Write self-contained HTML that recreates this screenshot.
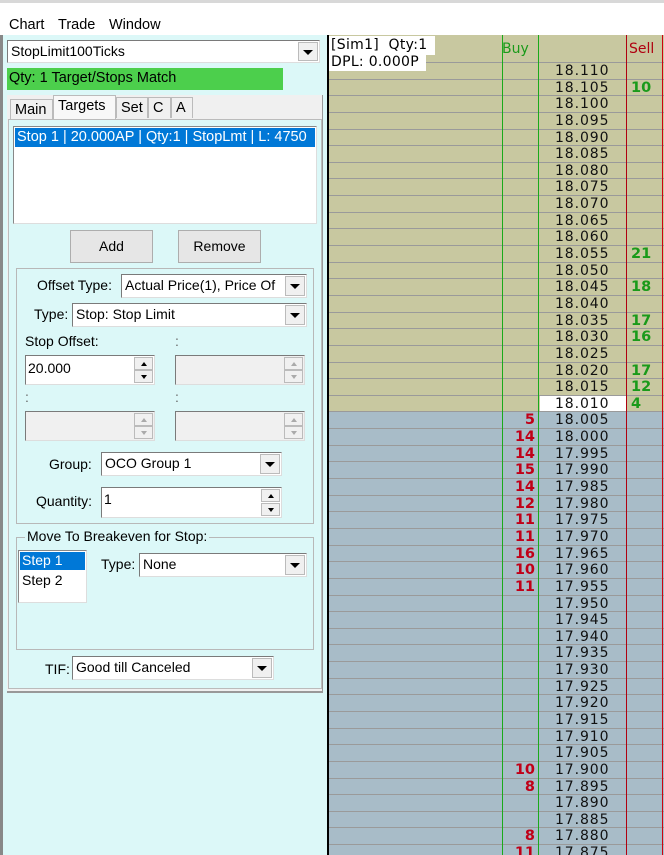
<!DOCTYPE html>
<html><head><meta charset="utf-8"><style>
*{box-sizing:border-box;margin:0;padding:0}
body{width:664px;height:855px;overflow:hidden;position:relative;background:#dcf8f8;font-family:"Liberation Sans",Arial,sans-serif;font-size:14px;color:#000}
.a{position:absolute}
.menu{left:0;top:0;width:664px;height:35px;background:#fff;border-top:3px solid #d8d8d8}
.menu span{position:absolute;top:14px;font-size:14.5px}
.combo{position:absolute;background:#fff;border:1px solid #7a7a7a;border-right-color:#ddd;border-bottom-color:#ddd;font-size:14px;padding:2px 3px;white-space:nowrap;overflow:hidden}
.combo .dd{position:absolute;right:1px;top:1px;bottom:1px;width:20px;background:#f0f0f0;border:1px solid #bbb}
.combo .dd:after{content:"";position:absolute;left:4px;top:7px;border-left:5px solid transparent;border-right:5px solid transparent;border-top:5px solid #000}
.spin{position:absolute;background:#fff;border:1px solid #7a7a7a;border-right-color:#ddd;border-bottom-color:#ddd;font-size:14px;padding:4px 2px}
.spin.dis{background:#f0f0f0}
.spin .u,.spin .d{position:absolute;right:1px;width:19px;height:13px;background:#f0f0f0;border:1px solid #bbb}
.spin .u{top:1px}.spin .d{bottom:1px}
.spin .u:after{content:"";position:absolute;left:6px;top:4px;border-left:3px solid transparent;border-right:3px solid transparent;border-bottom:4px solid #000}
.spin .d:after{content:"";position:absolute;left:6px;top:4px;border-left:3px solid transparent;border-right:3px solid transparent;border-top:4px solid #000}
.spin.dis .u:after{border-bottom-color:#aaa}.spin.dis .d:after{border-top-color:#aaa}
.btn{position:absolute;background:#e6e6e6;border:1px solid #adadad;text-align:center;line-height:31px;font-size:14px}
.grp{position:absolute;border:1px solid #b8b8b8}
.lbl{position:absolute;font-size:14px;white-space:nowrap}
.tab{position:absolute;top:97px;height:21px;background:#f0f0f0;border:1px solid #bbb;border-bottom:none;font-size:14.5px;padding:2px 4px}
#lad{position:absolute;left:327px;top:35px;width:337px;height:820px;background:#c8c8a0;border-left:2px solid #000;overflow:hidden;font-family:"DejaVu Sans",sans-serif}
.rows{position:absolute;left:0;top:27px;width:340px}
.r{height:16.65px;border-top:1px solid #9a9a9a;position:relative;font-size:14px;line-height:17px}
.t{background:#c8c8a0}.l{background:#a8bcc8}
.r i{font-style:normal;position:absolute;left:226px;letter-spacing:0.9px;color:#111}
.r .w{position:absolute;left:211px;width:87px;top:0;bottom:0;background:#fff}
.r .b{position:absolute;left:174px;width:32px;text-align:right;color:#c00018;font-weight:bold;font-size:14.5px}
.r .s{position:absolute;left:302px;color:#1a9a1a;font-weight:bold;font-size:14.5px}
.vl{position:absolute;top:0;bottom:0;width:1px}
</style></head><body>
<div class="a menu"><span style="left:9px">Chart</span><span style="left:58px">Trade</span><span style="left:109px">Window</span></div>
<div class="a" style="left:0;top:35px;width:3px;height:820px;background:#888"></div>

<div class="combo" style="left:7px;top:40px;width:313px;height:23px">StopLimit100Ticks<div class="dd"></div></div>
<div class="a" style="left:7px;top:68px;width:276px;height:22px;background:#4ccf4c;font-size:14.5px;padding:2px 2px">Qty: 1 Target/Stops Match</div>

<div class="a" style="left:7px;top:95px;width:316px;height:598px;background:#f0f0f0;border-bottom:2px solid #999;border-right:1px solid #999"></div>
<div class="tab" style="left:10px;width:43px;top:99px">Main</div>
<div class="tab" style="left:53px;width:63px;top:95px;height:24px;background:#f8f8f8">Targets</div>
<div class="tab" style="left:116px;width:32px">Set</div>
<div class="tab" style="left:148px;width:23px">C</div>
<div class="tab" style="left:171px;width:22px">A</div>
<div class="a" style="left:8px;top:119px;width:314px;height:570px;background:#dcf8f8;border:1px solid #bbb"></div>

<div class="a" style="left:13px;top:126px;width:304px;height:98px;background:#fff;border:1px solid #888;border-right-color:#ddd;border-bottom-color:#ddd"></div>
<div class="a" style="left:15px;top:128px;width:300px;height:19px;background:#0078d7;color:#fff;font-size:14.5px;padding:1px 2px;white-space:nowrap;overflow:hidden">Stop 1 | 20.000AP | Qty:1 | StopLmt | L: 4750</div>

<div class="btn" style="left:70px;top:230px;width:83px;height:33px">Add</div>
<div class="btn" style="left:178px;top:230px;width:83px;height:33px">Remove</div>

<div class="grp" style="left:16px;top:268px;width:298px;height:256px"></div>
<div class="lbl" style="left:37px;top:277px">Offset Type:</div>
<div class="combo" style="left:121px;top:274px;width:186px;height:24px">Actual Price(1), Price Of<div class="dd"></div></div>
<div class="lbl" style="left:34px;top:306px">Type:</div>
<div class="combo" style="left:72px;top:303px;width:235px;height:24px">Stop: Stop Limit<div class="dd"></div></div>
<div class="lbl" style="left:25px;top:333px">Stop Offset:</div>
<div class="lbl" style="left:175px;top:333px;color:#666">:</div>
<div class="spin" style="left:25px;top:355px;width:130px;height:30px">20.000<div class="u"></div><div class="d"></div></div>
<div class="spin dis" style="left:175px;top:355px;width:130px;height:30px"><div class="u"></div><div class="d"></div></div>
<div class="lbl" style="left:25px;top:389px;color:#666">:</div>
<div class="lbl" style="left:175px;top:389px;color:#666">:</div>
<div class="spin dis" style="left:25px;top:411px;width:130px;height:30px"><div class="u"></div><div class="d"></div></div>
<div class="spin dis" style="left:175px;top:411px;width:130px;height:30px"><div class="u"></div><div class="d"></div></div>
<div class="lbl" style="left:49px;top:456px">Group:</div>
<div class="combo" style="left:101px;top:452px;width:181px;height:24px">OCO Group 1<div class="dd"></div></div>
<div class="lbl" style="left:36px;top:493px">Quantity:</div>
<div class="spin" style="left:101px;top:487px;width:181px;height:31px;padding-top:3px">1<div class="u"></div><div class="d"></div></div>

<div class="grp" style="left:16px;top:537px;width:298px;height:113px"></div>
<div class="lbl" style="left:25px;top:528px;background:#dcf8f8;padding:0 2px">Move To Breakeven for Stop:</div>
<div class="a" style="left:18px;top:550px;width:69px;height:53px;background:#fff;border:1px solid #888;border-right-color:#ddd;border-bottom-color:#ddd"></div>
<div class="a" style="left:20px;top:552px;width:65px;height:18px;background:#0078d7;color:#fff;padding:0 2px">Step 1</div>
<div class="lbl" style="left:22px;top:572px">Step 2</div>
<div class="lbl" style="left:101px;top:556px">Type:</div>
<div class="combo" style="left:139px;top:553px;width:168px;height:24px">None<div class="dd"></div></div>
<div class="lbl" style="left:45px;top:661px">TIF:</div>
<div class="combo" style="left:72px;top:656px;width:202px;height:24px">Good till Canceled<div class="dd"></div></div>

<div id="lad">
<div class="a" style="left:170px;top:0;height:27px;width:40px;font-size:14px;color:#1a9a1a;padding-top:6px;padding-left:3px">Buy</div>
<div class="a" style="left:300px;top:0;height:27px;font-size:14px;color:#b00010;padding-top:6px">Sell</div>
<div class="rows">
<div class="r t"><i>18.110</i></div>
<div class="r t"><i>18.105</i><b class="s">10</b></div>
<div class="r t"><i>18.100</i></div>
<div class="r t"><i>18.095</i></div>
<div class="r t"><i>18.090</i></div>
<div class="r t"><i>18.085</i></div>
<div class="r t"><i>18.080</i></div>
<div class="r t"><i>18.075</i></div>
<div class="r t"><i>18.070</i></div>
<div class="r t"><i>18.065</i></div>
<div class="r t"><i>18.060</i></div>
<div class="r t"><i>18.055</i><b class="s">21</b></div>
<div class="r t"><i>18.050</i></div>
<div class="r t"><i>18.045</i><b class="s">18</b></div>
<div class="r t"><i>18.040</i></div>
<div class="r t"><i>18.035</i><b class="s">17</b></div>
<div class="r t"><i>18.030</i><b class="s">16</b></div>
<div class="r t"><i>18.025</i></div>
<div class="r t"><i>18.020</i><b class="s">17</b></div>
<div class="r t"><i>18.015</i><b class="s">12</b></div>
<div class="r t"><span class="w"></span><i>18.010</i><b class="s">4</b></div>
<div class="r l"><b class="b">5</b><i>18.005</i></div>
<div class="r l"><b class="b">14</b><i>18.000</i></div>
<div class="r l"><b class="b">14</b><i>17.995</i></div>
<div class="r l"><b class="b">15</b><i>17.990</i></div>
<div class="r l"><b class="b">14</b><i>17.985</i></div>
<div class="r l"><b class="b">12</b><i>17.980</i></div>
<div class="r l"><b class="b">11</b><i>17.975</i></div>
<div class="r l"><b class="b">11</b><i>17.970</i></div>
<div class="r l"><b class="b">16</b><i>17.965</i></div>
<div class="r l"><b class="b">10</b><i>17.960</i></div>
<div class="r l"><b class="b">11</b><i>17.955</i></div>
<div class="r l"><i>17.950</i></div>
<div class="r l"><i>17.945</i></div>
<div class="r l"><i>17.940</i></div>
<div class="r l"><i>17.935</i></div>
<div class="r l"><i>17.930</i></div>
<div class="r l"><i>17.925</i></div>
<div class="r l"><i>17.920</i></div>
<div class="r l"><i>17.915</i></div>
<div class="r l"><i>17.910</i></div>
<div class="r l"><i>17.905</i></div>
<div class="r l"><b class="b">10</b><i>17.900</i></div>
<div class="r l"><b class="b">8</b><i>17.895</i></div>
<div class="r l"><i>17.890</i></div>
<div class="r l"><i>17.885</i></div>
<div class="r l"><b class="b">8</b><i>17.880</i></div>
<div class="r l"><b class="b">11</b><i>17.875</i></div>
</div>
<div class="vl" style="left:173px;background:#1aaa1a"></div>
<div class="vl" style="left:209px;background:#1aaa1a"></div>
<div class="vl" style="left:297px;background:#b00010"></div>
<div class="vl" style="left:333px;background:#d00010"></div>
<div class="a" style="left:0;top:1px;width:106px;height:19px;background:#fff;font-size:14px;padding:1px 2px;letter-spacing:0.3px;white-space:nowrap">[Sim1]&nbsp; Qty:1</div>
<div class="a" style="left:0;top:19px;width:97px;height:17px;background:#fff;font-size:14px;padding:0 2px;letter-spacing:0.3px;white-space:nowrap">DPL: 0.000P</div>
</div>
</body></html>
